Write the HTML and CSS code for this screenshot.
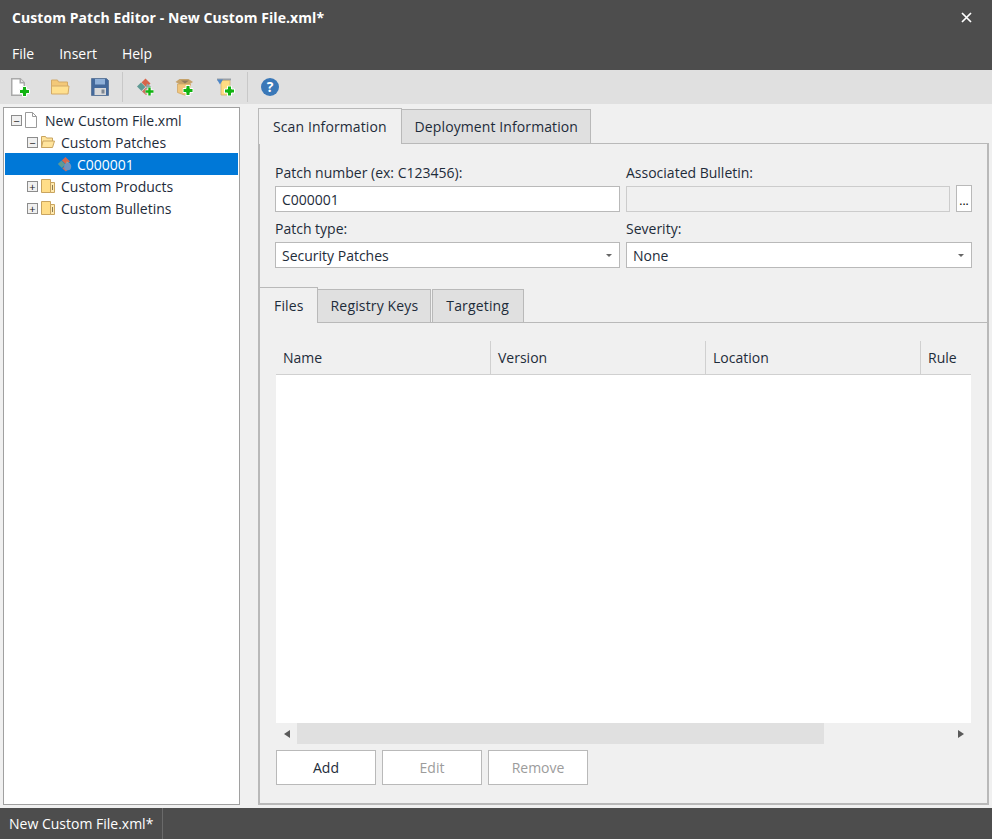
FILE: index.html
```html
<!DOCTYPE html>
<html lang="en">
<head>
<meta charset="utf-8">
<title>Custom Patch Editor</title>
<link rel="stylesheet" href="styles.css">
</head>
<body>
<svg class="defs" width="0" height="0" aria-hidden="true">
  <defs>
    <symbol id="plus" viewBox="0 0 11 11"><path d="M3.500 0.500h4v3h3v4h-3v3h-4v-3h-3v-4h3z" fill="#12b312" stroke="#fff" stroke-width="1"/></symbol>
    <symbol id="patch" viewBox="0 0 18 18"><path d="M9.500 1l5 5-4 4-5-5z" fill="#d8654a"/><path d="M1 9l4-4 4.500 4.500-4 4z" fill="#5f9a94"/><path d="M6 14l4-4 4 4-4 3.500z" fill="#c9705f"/><path d="M11 6l4 3-4 3-1-3z" fill="#8fa9a5"/></symbol>
    <symbol id="closedfolder" viewBox="0 0 16 16"><path d="M1.500 1.500h9v13h-9z" fill="#ffdd88" stroke="#c9a45f"/><path d="M10.500 4.500h4v10h-4z" fill="#ffe9ae" stroke="#c9a45f"/><path d="M12.500 7v5" stroke="#8c7b52"/></symbol>
    <symbol id="openfolder" viewBox="0 0 16 14"><path d="M1.500 12.500v-11h4l1 1.500h6v3" fill="#ffe49c" stroke="#c9a45f"/><path d="M1.500 12.500l1.500-6.500h11.500l-2 6.500z" fill="#ffe49c" stroke="#c9a45f"/></symbol>
  </defs>
</svg>
<div class="app">
  <header class="titlebar">
    <span class="title">Custom Patch Editor - New Custom File.xml*</span>
    <svg class="close" width="11" height="11" viewBox="0 0 11 11"><path d="M1 1l9 9M10 1l-9 9" stroke="#fff" stroke-width="1.700"/></svg>
  </header>
  <nav class="menubar">
    <span class="menu">File</span><span class="menu">Insert</span><span class="menu">Help</span>
  </nav>
  <div class="toolbar">
    <span class="tool">
      <svg class="ico" width="20" height="20" viewBox="0 0 20 20"><path d="M1.750 1.750h8.500l4 4v12.500h-12.500z" fill="#fff" stroke="#a9a9a9" stroke-width="1.500"/><path d="M10.250 1.750v4h4" fill="#e6e6e6" stroke="#a9a9a9" stroke-width="1.500"/><use href="#plus" x="9" y="9" width="11" height="11"/></svg>
    </span>
    <span class="tool">
      <svg class="ico" width="20" height="20" viewBox="0 0 20 20"><path d="M1.500 17v-14h6l1 2h9v4" fill="#f3c878" stroke="#d3aa68"/><path d="M1.500 17v-8h17.500l-1 8z" fill="#ffe08f" stroke="#d3aa68"/></svg>
    </span>
    <span class="tool">
      <svg class="ico" width="20" height="20" viewBox="0 0 20 20"><path d="M1.500 1.500h15l2 2v15h-17z" fill="#44699b" stroke="#607a9c"/><rect x="5" y="2" width="10" height="5.500" fill="#8fb0d8"/><rect x="4.500" y="11" width="11.500" height="7" fill="#d9d9d9"/><rect x="11.500" y="12.500" width="3" height="4" fill="#7e8793"/></svg>
    </span>
    <span class="sep"></span>
    <span class="tool">
      <svg class="ico" width="20" height="20" viewBox="0 0 20 20"><use href="#patch" x="1" y="0.500" width="18" height="18"/><path d="M14.500 10.500v8M10.500 14.500h8" stroke="#fff" stroke-width="4"/><path d="M14.500 10.500v8M10.500 14.500h8" stroke="#12b312" stroke-width="2.400"/></svg>
    </span>
    <span class="tool">
      <svg class="ico" width="20" height="20" viewBox="0 0 20 20"><path d="M0.500 5l4-3h9l4.500 3-4 2.500h-9z" fill="#c5a26a"/><path d="M2.500 7h13v9l-6 2-7-2.500z" fill="#f1c67c" stroke="#cfa766" stroke-width="0.800"/><path d="M6 3.500l4 3 4-3z" fill="#8e7a5c"/><use href="#plus" x="7.500" y="8" width="11" height="11"/></svg>
    </span>
    <span class="tool">
      <svg class="ico" width="20" height="20" viewBox="0 0 20 20"><path d="M2 1.500h14v2h-14z" fill="#9aa0a6"/><path d="M6 3.500h9v14.500h-9z" fill="#ffdc82" stroke="#cfb071" stroke-width="0.800"/><path d="M2 2.500h6l-3 5z" fill="#4e86c6"/><use href="#plus" x="9" y="8.500" width="11" height="11"/></svg>
    </span>
    <span class="sep"></span>
    <span class="tool">
      <svg class="ico" width="20" height="20" viewBox="0 0 20 20"><circle cx="10" cy="10" r="9" fill="#3a78b8"/><text x="10" y="15" class="help">?</text></svg>
    </span>
  </div>
  <main class="main">
    <aside class="tree">
      <div class="node lvl0">
        <span class="box">−</span>
        <svg class="nodeicon doc" width="12" height="16" viewBox="0 0 12 16"><path d="M0.500 0.500h7l4 4v11h-11z" fill="#fff" stroke="#9a9a9a"/><path d="M7.500 0.500v4h4" fill="none" stroke="#9a9a9a"/></svg>
        <span class="label">New Custom File.xml</span>
      </div>
      <div class="node lvl1">
        <span class="box">−</span>
        <svg class="nodeicon" width="16" height="14" viewBox="0 0 16 14"><use href="#openfolder"/></svg>
        <span class="label">Custom Patches</span>
      </div>
      <div class="node lvl2 selected">
        <svg class="nodeicon" width="16" height="16" viewBox="0 0 18 18"><use href="#patch"/><circle cx="12" cy="12" r="4" fill="#6e93c0"/></svg>
        <span class="label">C000001</span>
      </div>
      <div class="node lvl1">
        <span class="box">+</span>
        <svg class="nodeicon" width="16" height="16" viewBox="0 0 16 16"><use href="#closedfolder"/></svg>
        <span class="label">Custom Products</span>
      </div>
      <div class="node lvl1">
        <span class="box">+</span>
        <svg class="nodeicon" width="16" height="16" viewBox="0 0 16 16"><use href="#closedfolder"/></svg>
        <span class="label">Custom Bulletins</span>
      </div>
    </aside>
    <section class="editor">
      <div class="tabs outer-tabs">
        <span class="tab active">Scan Information</span>
        <span class="tab">Deployment Information</span>
      </div>
      <div class="panel">
        <div class="form">
          <div class="field">
            <label class="flabel">Patch number (ex: C123456):</label>
            <div class="input">C000001</div>
          </div>
          <div class="field">
            <label class="flabel">Associated Bulletin:</label>
            <div class="inputrow">
              <div class="input disabled"></div>
              <button class="dots">...</button>
            </div>
          </div>
          <div class="field">
            <label class="flabel">Patch type:</label>
            <div class="input select">Security Patches<span class="caret"></span></div>
          </div>
          <div class="field">
            <label class="flabel">Severity:</label>
            <div class="input select">None<span class="caret"></span></div>
          </div>
        </div>
        <div class="tabs inner-tabs">
          <span class="tab active">Files</span>
          <span class="tab">Registry Keys</span>
          <span class="tab">Targeting</span>
        </div>
        <div class="subpanel">
          <div class="thead">
            <span class="th c1">Name</span>
            <span class="th c2">Version</span>
            <span class="th c3">Location</span>
            <span class="th c4">Rule</span>
          </div>
          <div class="tbody"></div>
          <div class="hscroll">
            <span class="arrow left"></span>
            <span class="thumb"></span>
            <span class="arrow right"></span>
          </div>
          <div class="buttons">
            <button class="btn">Add</button>
            <button class="btn off">Edit</button>
            <button class="btn off">Remove</button>
          </div>
        </div>
      </div>
    </section>
  </main>
  <footer class="statusbar"><span>New Custom File.xml*</span><span class="divider"></span></footer>
</div>
</body>
</html>
```
FILE: styles.css
```css
* { box-sizing: border-box; }
html, body { margin: 0; padding: 0; }
body {
  font-family: "Open Sans", "Noto Sans", sans-serif;
  font-size: 14px;
  color: #1e2c3a;
  background: #f0f0f0;
  overflow: hidden;
}
button { font: inherit; }
.defs { position: absolute; }
.app { width: 992px; height: 839px; display: flex; flex-direction: column; }

.titlebar {
  height: 38px; flex: none; background: #4d4d4d; color: #fff;
  display: flex; align-items: center; justify-content: space-between;
  padding: 0 20px 4px 12px;
}
.title { font-weight: 700; font-size: 14px; letter-spacing: 0.07px; }
.close { margin-top: 0; }
.menubar {
  height: 32px; flex: none; background: #4d4d4d; color: #fff;
  display: flex; align-items: center; gap: 25px; padding: 0 0 2px 12px;
}
.toolbar {
  height: 34px; flex: none; background: #e0e0e0;
  display: flex; align-items: center; padding-left: 10px;
}
.tool { width: 20px; height: 24px; display: flex; align-items: center; margin-right: 20px; }
.ico { display: block; }
.help { font: 700 14px "Open Sans", sans-serif; fill: #fff; text-anchor: middle; }
.sep { width: 1px; height: 30px; background: #c8c8c8; margin: 0 12px 0 -8px; }

.main { flex: 1; display: flex; min-height: 0; padding: 3px; gap: 18px; }
.tree {
  width: 237px; flex: none; background: #fff; border: 1px solid #a0a0a0;
  padding: 1px;
}
.node { height: 22px; display: flex; align-items: center; }
.lvl0 { padding-left: 6px; }
.lvl1 { padding-left: 22px; }
.lvl2 { padding-left: 50px; }
.selected { background: #0078d7; color: #fff; }
.box {
  width: 11px; height: 11px; border: 1px solid #8c8c8c; background: #f0f0f0;
  display: flex; align-items: center; justify-content: center; font-size: 11px; line-height: 1;
  color: #222; flex: none;
}
.nodeicon { flex: none; margin-left: 2px; }
.nodeicon.doc { margin-left: 3px; }
.label { margin-left: 5px; white-space: nowrap; }
.lvl0 .label { margin-left: 8px; }
.lvl2 .label { margin-left: 4px; }

.editor { flex: 1; min-width: 0; display: flex; flex-direction: column; }
.tabs { display: flex; align-items: flex-end; flex: none; }
.tab {
  background: #e0e0e0; border: 1px solid #b9b9b9; border-bottom: 0;
  display: flex; align-items: center; white-space: nowrap;
  letter-spacing: 0.1px; margin-left: 1px;
}
.tab.active { background: #f0f0f0; position: relative; margin-left: 0; z-index: 1; }
.tab.active + .tab { margin-left: 0; border-left: 0; }
.outer-tabs { height: 36px; margin-top: 1px; margin-bottom: -1px; }
.outer-tabs .tab { height: 35px; padding: 0 12px 2px 13px; }
.outer-tabs .tab.active { height: 36px; padding: 0 14px; }
.panel {
  flex: 1; display: flex; flex-direction: column; min-height: 0;
  border: 2px solid #b9b9b9; border-top-width: 1px;
}
.form {
  display: grid; grid-template-columns: 345px 346px; column-gap: 6px;
  padding: 18px 0 0 15px; row-gap: 6px;
}
.flabel { display: block; height: 24px; line-height: 22px; }
.input {
  height: 26px; border: 1px solid #b9b9b9; background: #fff;
  padding-left: 6px; line-height: 25px; position: relative;
}
.input.disabled { background: #f0f0f0; border-color: #cccccc; flex: 1; }
.inputrow { display: flex; gap: 6px; align-items: flex-end; height: 26px; }
.dots { width: 16px; height: 27px; border: 1px solid #b9b9b9; background: #fff; padding: 0; font-size: 12px; line-height: 30px; flex: none; }
.caret {
  position: absolute; right: 7px; top: 11px; width: 0; height: 0;
  border-left: 3.500px solid transparent; border-right: 3.500px solid transparent; border-top: 3.500px solid #666;
}
.inner-tabs { height: 36px; margin-top: 19px; margin-bottom: -1px; margin-left: -1px; }
.inner-tabs .tab { height: 34px; padding: 0 12px 2px 13px; letter-spacing: 0.15px; }
.inner-tabs .tab:last-child { padding-right: 14px; }
.inner-tabs .tab.active { height: 36px; padding: 0 13px 0 14px; }
.subpanel {
  flex: 1; min-height: 0; border-top: 1px solid #b9b9b9;
  padding: 18px 16px 0; display: flex; flex-direction: column;
}
.thead { height: 34px; flex: none; display: flex; border-bottom: 1px solid #d0d0d0; }
.th { height: 33px; display: flex; align-items: center; padding-left: 7px; border-right: 1px solid #d0d0d0; }
.c1, .c2, .c3 { width: 215px; }
.c4 { flex: 1; border-right: 0; }
.tbody { height: 348px; flex: none; background: #fff; }
.hscroll { height: 21px; flex: none; display: flex; align-items: center; }
.arrow { width: 21px; height: 21px; flex: none; display: flex; align-items: center; justify-content: center; }
.arrow::before { content: ""; width: 0; height: 0; border-top: 4px solid transparent; border-bottom: 4px solid transparent; }
.arrow.left::before { border-right: 6px solid #5a5a5a; }
.arrow.right::before { border-left: 6px solid #5a5a5a; }
.thumb { width: 527px; height: 21px; background: #e0e0e0; flex: none; margin-right: auto; }
.buttons { display: flex; gap: 6px; padding-top: 6px; }
.btn { width: 100px; height: 35px; border: 1px solid #b9b9b9; background: #fff; color: #1e2c3a; padding: 0; }
.btn.off { color: #9c9c9c; }

.statusbar { height: 31px; flex: none; background: #4d4d4d; color: #fff; display: flex; align-items: center; padding-left: 9px; }
.divider { width: 1px; height: 31px; background: #6a6a6a; margin-left: 9px; }
```
